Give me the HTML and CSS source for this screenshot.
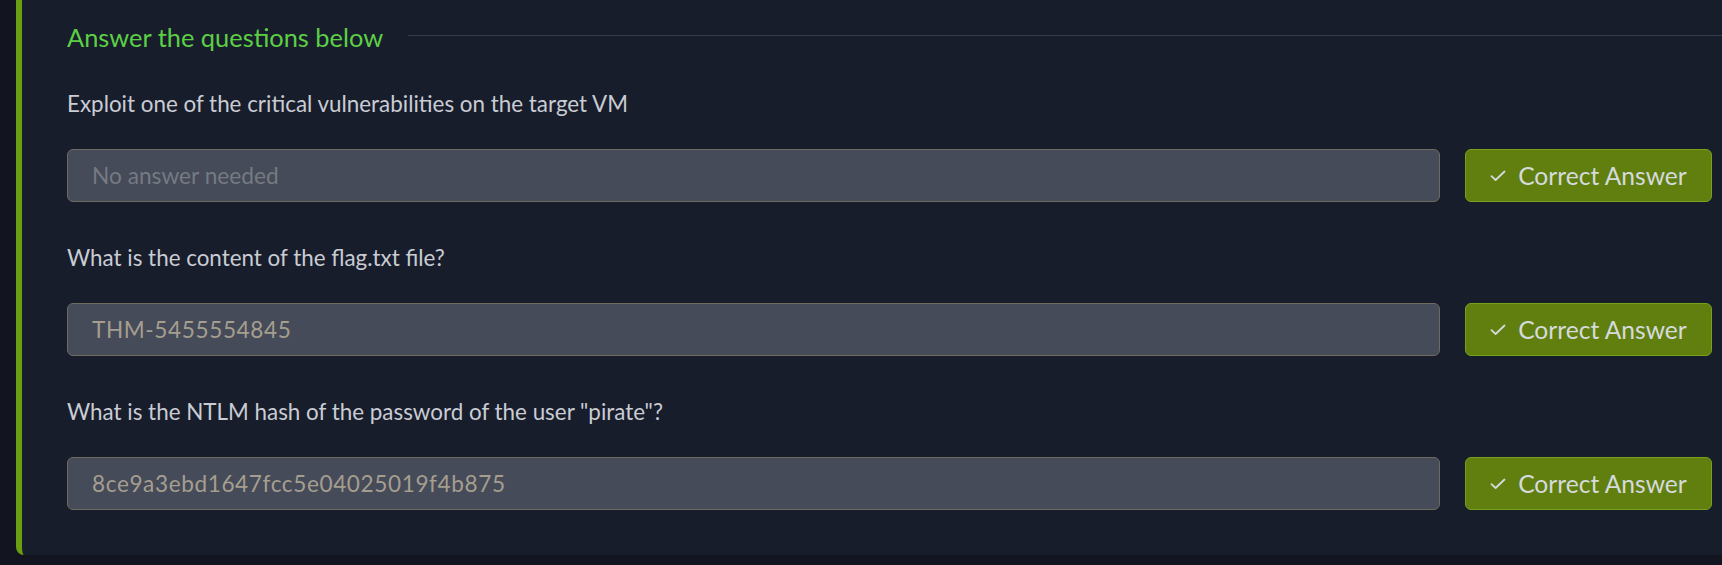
FILE: index.html
```html
<!DOCTYPE html>
<html lang="en">
<head>
<meta charset="utf-8">
<title>Answer the questions below</title>
<link rel="stylesheet" href="styles.css">
</head>
<body>
<section class="task">
  <div class="heading-row">
    <h3 class="heading">Answer the questions below</h3>
    <span class="rule"></span>
  </div>

  <div class="questions">
    <div class="question">
      <p class="q-text">Exploit one of the critical vulnerabilities on the target VM</p>
      <div class="answer-row">
        <input class="answer-input" type="text" placeholder="No answer needed" readonly>
        <button class="btn-correct" type="button">
          <svg class="check" viewBox="0 0 16 12" width="16" height="12" aria-hidden="true"><path d="M1.5 6.2 L5.6 10 L14.5 1.5" fill="none" stroke="currentColor" stroke-width="1.8" stroke-linecap="round" stroke-linejoin="round"/></svg>
          <span>Correct Answer</span>
        </button>
      </div>
    </div>

    <div class="question">
      <p class="q-text">What is the content of the flag.txt file?</p>
      <div class="answer-row">
        <input class="answer-input filled" type="text" value="THM-5455554845" readonly>
        <button class="btn-correct" type="button">
          <svg class="check" viewBox="0 0 16 12" width="16" height="12" aria-hidden="true"><path d="M1.5 6.2 L5.6 10 L14.5 1.5" fill="none" stroke="currentColor" stroke-width="1.8" stroke-linecap="round" stroke-linejoin="round"/></svg>
          <span>Correct Answer</span>
        </button>
      </div>
    </div>

    <div class="question">
      <p class="q-text">What is the NTLM hash of the password of the user "pirate"?</p>
      <div class="answer-row">
        <input class="answer-input filled" type="text" value="8ce9a3ebd1647fcc5e04025019f4b875" readonly>
        <button class="btn-correct" type="button">
          <svg class="check" viewBox="0 0 16 12" width="16" height="12" aria-hidden="true"><path d="M1.5 6.2 L5.6 10 L14.5 1.5" fill="none" stroke="currentColor" stroke-width="1.8" stroke-linecap="round" stroke-linejoin="round"/></svg>
          <span>Correct Answer</span>
        </button>
      </div>
    </div>
  </div>
</section>
</body>
</html>
```

FILE: styles.css
```css
* { box-sizing: border-box; }

html, body {
  margin: 0;
  padding: 0;
  background: #12151f;
  height: 565px;
  overflow: hidden;
}

body {
  font-family: Lato, "Noto Sans", sans-serif;
}

.task {
  margin-left: 16px;
  height: 555px;
  background: #181d2c;
  border-left: 6px solid #6a9f12;
  border-bottom-left-radius: 8px;
  padding: 0 10px 0 45px;
}

.heading-row {
  display: flex;
  align-items: center;
  height: 70px;
}

.heading {
  margin: 0;
  font-size: 25.4px;
  font-weight: 400;
  color: #5ccf45;
  line-height: 32px;
  padding-top: 3px;
}

.rule {
  flex: 1;
  height: 1px;
  background: #363b4b;
  margin-left: 25px;
  margin-right: -10px;
}

.questions {
  display: flex;
  flex-direction: column;
  gap: 40px;
  margin-top: 18px;
}

.q-text {
  margin: 0;
  font-size: 22.4px;
  line-height: 32px;
  color: #c9ccd3;
}

.answer-row {
  display: flex;
  gap: 25px;
  margin-top: 29px;
}

.answer-input {
  flex: 1;
  height: 53px;
  background: #454b59;
  border: 1px solid #6e6a5e;
  border-radius: 6px;
  padding: 0 24px;
  font-family: Lato, "Noto Sans", sans-serif;
  font-size: 22.7px;
  color: #a59e8f;
  outline: none;
}

.answer-input::placeholder {
  color: #767a82;
}

.answer-input.filled {
  font-size: 22.6px;
  letter-spacing: 0.6px;
}

.btn-correct {
  width: 247px;
  height: 53px;
  display: flex;
  align-items: center;
  justify-content: center;
  gap: 12px;
  background: #617f0e;
  border: 1px solid #76a21b;
  border-radius: 6px;
  color: #d5dadd;
  font-family: Lato, "Noto Sans", sans-serif;
  font-size: 24.6px;
  padding: 0;
  cursor: pointer;
}

.check {
  width: 16px;
  height: 12px;
}
```
